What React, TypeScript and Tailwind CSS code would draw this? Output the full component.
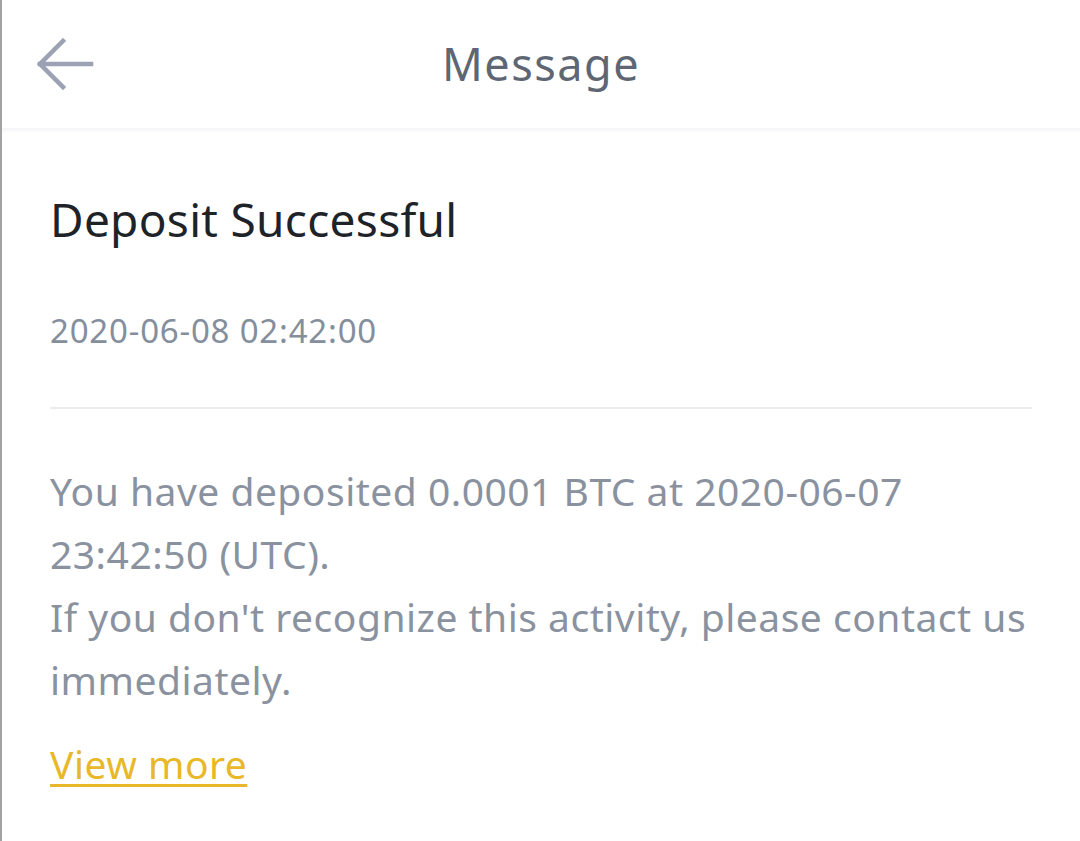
export default function App() {
  return (
    <div className="w-full h-[841px] bg-white border-l-2 border-[#a3a3a3] font-['Noto_Sans',sans-serif] overflow-hidden">
      {/* header */}
      <div className="h-[128px] grid grid-cols-[1fr_auto_1fr] items-center">
        <div className="pl-[34px]">
          <svg width="62" height="56" viewBox="0 0 62 56" fill="none" stroke="#9aa2b3" strokeWidth="4.5" strokeLinecap="square">
            <path d="M4 28H55" />
            <path d="M27 5L4 28L27 51" />
          </svg>
        </div>
        <div className="text-[45px] leading-[56px] text-[#5e6673] tracking-[1.5px]">Message</div>
        <div />
      </div>
      <div className="h-[5px] bg-gradient-to-b from-[#f3f4f6] to-white" />

      {/* message */}
      <div className="px-[48px]">
        <h1 className="mt-[58px] text-[46px] leading-[56px] tracking-[0.3px] text-[#1e2329]">Deposit Successful</h1>
        <p className="mt-[64px] text-[33px] leading-[40px] tracking-[0.8px] text-[#848e9c]">2020-06-08 02:42:00</p>
        <div className="mt-[56px] h-[2px] bg-[#eaecef]" />
        <div className="mt-[50px] text-[39px] leading-[63px] tracking-[0.5px] text-[#8a929f]">
          <p>You have deposited 0.0001 BTC at 2020-06-07 23:42:50 (UTC).</p>
          <p>If you don't recognize this activity, please contact us immediately.</p>
        </div>
        <a className="block mt-[21px] text-[39px] leading-[63px] tracking-[0.5px] text-[#e8b828] underline decoration-[3px] underline-offset-[5px]">
          View more
        </a>
      </div>
    </div>
  );
}
